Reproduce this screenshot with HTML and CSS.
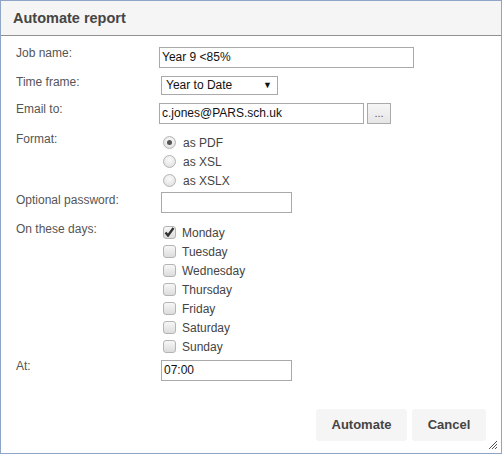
FILE: index.html
```html
<!DOCTYPE html>
<html>
<head>
<meta charset="utf-8">
<link rel="stylesheet" href="styles.css">
</head>
<body>
<div class="dialog">
  <div class="titlebar">Automate report</div>
  <div class="content">
    <div class="row r-job">
      <div class="label">Job name:</div>
      <div class="ctrl"><div class="input w-job">Year 9 &lt;85%</div></div>
    </div>
    <div class="row r-time">
      <div class="label">Time frame:</div>
      <div class="ctrl"><div class="select"><span>Year to Date</span><span class="arrow">&#9660;</span></div></div>
    </div>
    <div class="row r-email">
      <div class="label">Email to:</div>
      <div class="ctrl ctrl-inline"><div class="input w-email">c.jones@PARS.sch.uk</div><div class="dots">...</div></div>
    </div>
    <div class="row r-format">
      <div class="label">Format:</div>
      <div class="ctrl list">
        <div class="opt"><span class="radio checked"></span>as PDF</div>
        <div class="opt"><span class="radio"></span>as XSL</div>
        <div class="opt"><span class="radio"></span>as XSLX</div>
      </div>
    </div>
    <div class="row r-pass">
      <div class="label">Optional password:</div>
      <div class="ctrl"><div class="input w-small"></div></div>
    </div>
    <div class="row r-days">
      <div class="label">On these days:</div>
      <div class="ctrl list">
        <div class="opt"><span class="check checked"><svg width="11" height="10" viewBox="0 0 11 10"><path d="M1.5 5.5 L4 8.5 L9.5 1" fill="none" stroke="#333" stroke-width="2.4"/></svg></span>Monday</div>
        <div class="opt"><span class="check"></span>Tuesday</div>
        <div class="opt"><span class="check"></span>Wednesday</div>
        <div class="opt"><span class="check"></span>Thursday</div>
        <div class="opt"><span class="check"></span>Friday</div>
        <div class="opt"><span class="check"></span>Saturday</div>
        <div class="opt"><span class="check"></span>Sunday</div>
      </div>
    </div>
    <div class="row r-at">
      <div class="label">At:</div>
      <div class="ctrl"><div class="input w-small">07:00</div></div>
    </div>
  </div>
  <div class="buttons">
    <div class="btn b-auto">Automate</div>
    <div class="btn b-cancel">Cancel</div>
  </div>
  <svg class="grip" width="10" height="10" viewBox="0 0 10 10">
    <path d="M9 1 L1 9 M9 4 L4 9 M9 7 L7 9" stroke="#555" stroke-width="1"/>
  </svg>
</div>
</body>
</html>
```

FILE: styles.css
```css
html, body {
  margin: 0;
  padding: 0;
  background: #ffffff;
}
body {
  font-family: "Liberation Sans", Arial, sans-serif;
}
.dialog {
  position: relative;
  width: 500px;
  height: 452px;
  border: 1px solid #8ea5c5;
  display: flex;
  flex-direction: column;
  background: #fff;
}
.titlebar {
  height: 35px;
  box-sizing: border-box;
  padding: 9px 0 0 12px;
  background: #f5f5f5;
  border-bottom: 1px solid #8f8f8f;
  font-weight: bold;
  font-size: 14.5px;
  color: #454545;
  line-height: 17px;
}
.content {
  display: flex;
  flex-direction: column;
  padding-left: 15px;
}
.row {
  display: grid;
  grid-template-columns: 143px 1fr;
  align-items: start;
}
.label {
  font-size: 12px;
  line-height: 14px;
  color: #555;
  margin-top: -1px;
}
.ctrl-inline {
  display: flex;
  gap: 3px;
}
.input {
  box-sizing: border-box;
  height: 21px;
  border: 1px solid #a9a9a9;
  font-size: 12px;
  line-height: 19px;
  padding-left: 2px;
  color: #111;
  background: #fff;
}
.w-job { width: 255px; }
.w-email { width: 205px; }
.w-small { width: 131px; margin-left: 2px; }
.select {
  box-sizing: border-box;
  width: 117px;
  height: 19px;
  margin-left: 2px;
  border: 1px solid #a9a9a9;
  font-size: 12px;
  line-height: 17px;
  color: #111;
  padding-left: 4px;
  display: flex;
  justify-content: space-between;
}
.select .arrow {
  font-size: 9px;
  margin-right: 5px;
  color: #111;
}
.dots {
  box-sizing: border-box;
  width: 24px;
  height: 21px;
  border: 1px solid #aaa;
  background: linear-gradient(#f6f6f6, #e6e6e6);
  font-size: 11px;
  line-height: 18px;
  text-align: center;
  color: #555;
}
.r-job { margin-top: 11px; }
.r-time { margin-top: 8px; }
.r-email { margin-top: 8px; }
.r-format { margin-top: 9px; }
.r-pass { margin-top: 2px; }
.r-pass .label { margin-top: 1px; }
.r-days { margin-top: 10px; }
.r-at { margin-top: 4px; }
.list {
  display: flex;
  flex-direction: column;
}
.opt {
  height: 19px;
  display: flex;
  align-items: center;
  font-size: 12px;
  color: #444;
  padding-left: 4px;
}
.radio {
  box-sizing: border-box;
  width: 13px;
  height: 13px;
  border-radius: 50%;
  border: 1px solid #b4b4b4;
  background: radial-gradient(circle at 50% 35%, #fafafa, #dcdcdc);
  margin-right: 7px;
  display: flex;
  align-items: center;
  justify-content: center;
}
.radio.checked::after {
  content: "";
  width: 5px;
  height: 5px;
  border-radius: 50%;
  background: #555;
}
.check {
  box-sizing: border-box;
  width: 13px;
  height: 13px;
  border-radius: 3px;
  border: 1px solid #b4b4b4;
  background: linear-gradient(#f7f7f7, #dcdcdc);
  margin-right: 6px;
  display: flex;
  align-items: center;
  justify-content: center;
}
.check svg {
  margin-top: -1px;
}
.buttons {
  display: flex;
  justify-content: flex-end;
  gap: 5px;
  margin-top: 28px;
  padding-right: 15px;
}
.btn {
  height: 32px;
  line-height: 32px;
  background: #f5f5f5;
  border-radius: 3px;
  font-weight: bold;
  font-size: 13px;
  color: #444;
  text-align: center;
}
.b-auto { width: 91px; }
.b-cancel { width: 74px; }
.grip {
  position: absolute;
  right: 3px;
  bottom: 3px;
}
```
